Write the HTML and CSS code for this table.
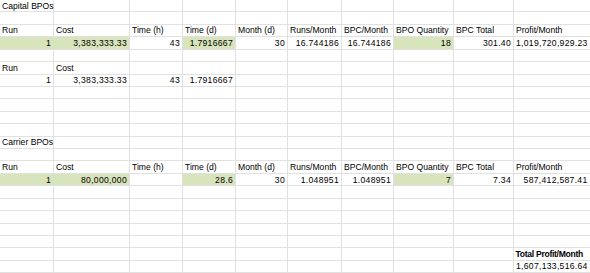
FILE: index.html
```html
<!DOCTYPE html>
<html>
<head>
<meta charset="utf-8">
<link rel="stylesheet" href="styles.css">
</head>
<body>
<div class="sheet">
<!-- row 1 -->
<div class="c">Capital BPOs</div><div class="c"></div><div class="c"></div><div class="c"></div><div class="c"></div><div class="c"></div><div class="c"></div><div class="c"></div><div class="c"></div><div class="c"></div>
<!-- row 2 -->
<div class="c"></div><div class="c"></div><div class="c"></div><div class="c"></div><div class="c"></div><div class="c"></div><div class="c"></div><div class="c"></div><div class="c"></div><div class="c"></div>
<!-- row 3 -->
<div class="c">Run</div><div class="c">Cost</div><div class="c">Time (h)</div><div class="c">Time (d)</div><div class="c">Month (d)</div><div class="c">Runs/Month</div><div class="c">BPC/Month</div><div class="c">BPO Quantity</div><div class="c">BPC Total</div><div class="c">Profit/Month</div>
<!-- row 4 -->
<div class="c n g gj">1</div><div class="c n g">3,383,333.33</div><div class="c n">43</div><div class="c n g">1.7916667</div><div class="c n">30</div><div class="c n">16.744186</div><div class="c n">16.744186</div><div class="c n g">18</div><div class="c n">301.40</div><div class="c n">1,019,720,929.23</div>
<!-- row 5 -->
<div class="c"></div><div class="c"></div><div class="c"></div><div class="c"></div><div class="c"></div><div class="c"></div><div class="c"></div><div class="c"></div><div class="c"></div><div class="c"></div>
<!-- row 6 -->
<div class="c">Run</div><div class="c">Cost</div><div class="c"></div><div class="c"></div><div class="c"></div><div class="c"></div><div class="c"></div><div class="c"></div><div class="c"></div><div class="c"></div>
<!-- row 7 -->
<div class="c n">1</div><div class="c n">3,383,333.33</div><div class="c n">43</div><div class="c n">1.7916667</div><div class="c"></div><div class="c"></div><div class="c"></div><div class="c"></div><div class="c"></div><div class="c"></div>
<!-- row 8 -->
<div class="c"></div><div class="c"></div><div class="c"></div><div class="c"></div><div class="c"></div><div class="c"></div><div class="c"></div><div class="c"></div><div class="c"></div><div class="c"></div>
<!-- row 9 -->
<div class="c"></div><div class="c"></div><div class="c"></div><div class="c"></div><div class="c"></div><div class="c"></div><div class="c"></div><div class="c"></div><div class="c"></div><div class="c"></div>
<!-- row 10 -->
<div class="c"></div><div class="c"></div><div class="c"></div><div class="c"></div><div class="c"></div><div class="c"></div><div class="c"></div><div class="c"></div><div class="c"></div><div class="c"></div>
<!-- row 11 -->
<div class="c"></div><div class="c"></div><div class="c"></div><div class="c"></div><div class="c"></div><div class="c"></div><div class="c"></div><div class="c"></div><div class="c"></div><div class="c"></div>
<!-- row 12 -->
<div class="c">Carrier BPOs</div><div class="c"></div><div class="c"></div><div class="c"></div><div class="c"></div><div class="c"></div><div class="c"></div><div class="c"></div><div class="c"></div><div class="c"></div>
<!-- row 13 -->
<div class="c"></div><div class="c"></div><div class="c"></div><div class="c"></div><div class="c"></div><div class="c"></div><div class="c"></div><div class="c"></div><div class="c"></div><div class="c"></div>
<!-- row 14 -->
<div class="c">Run</div><div class="c">Cost</div><div class="c">Time (h)</div><div class="c">Time (d)</div><div class="c">Month (d)</div><div class="c">Runs/Month</div><div class="c">BPC/Month</div><div class="c">BPO Quantity</div><div class="c">BPC Total</div><div class="c">Profit/Month</div>
<!-- row 15 -->
<div class="c n g gj">1</div><div class="c n g">80,000,000</div><div class="c n"></div><div class="c n g">28.6</div><div class="c n">30</div><div class="c n">1.048951</div><div class="c n">1.048951</div><div class="c n g">7</div><div class="c n">7.34</div><div class="c n">587,412,587.41</div>
<!-- row 16 -->
<div class="c"></div><div class="c"></div><div class="c"></div><div class="c"></div><div class="c"></div><div class="c"></div><div class="c"></div><div class="c"></div><div class="c"></div><div class="c"></div>
<!-- row 17 -->
<div class="c"></div><div class="c"></div><div class="c"></div><div class="c"></div><div class="c"></div><div class="c"></div><div class="c"></div><div class="c"></div><div class="c"></div><div class="c"></div>
<!-- row 18 -->
<div class="c"></div><div class="c"></div><div class="c"></div><div class="c"></div><div class="c"></div><div class="c"></div><div class="c"></div><div class="c"></div><div class="c"></div><div class="c"></div>
<!-- row 19 -->
<div class="c"></div><div class="c"></div><div class="c"></div><div class="c"></div><div class="c"></div><div class="c"></div><div class="c"></div><div class="c"></div><div class="c"></div><div class="c"></div>
<!-- row 20 -->
<div class="c"></div><div class="c"></div><div class="c"></div><div class="c"></div><div class="c"></div><div class="c"></div><div class="c"></div><div class="c"></div><div class="c"></div><div class="c"></div>
<!-- row 21 -->
<div class="c"></div><div class="c"></div><div class="c"></div><div class="c"></div><div class="c"></div><div class="c"></div><div class="c"></div><div class="c"></div><div class="c"></div><div class="c b">Total Profit/Month</div>
<!-- row 22 -->
<div class="c"></div><div class="c"></div><div class="c"></div><div class="c"></div><div class="c"></div><div class="c"></div><div class="c"></div><div class="c"></div><div class="c"></div><div class="c n">1,607,133,516.64</div>
</div>
</body>
</html>
```

FILE: styles.css
```css
html, body {
  margin: 0;
  padding: 0;
  background: #ffffff;
}

body {
  width: 590px;
  height: 273px;
  overflow: hidden;
  font-family: "Liberation Sans", Arial, sans-serif;
  color: #000000;
}

.sheet {
  display: grid;
  grid-template-columns: 54px 76px 53px 53px 52px 54px 52px 60px 60px 78px;
  grid-auto-rows: 12.43px;
  width: 592px;
}

.c {
  box-sizing: border-box;
  border-right: 1px solid #e1e1e1;
  border-bottom: 1px solid #e1e1e1;
  font-size: 8.6px;
  line-height: 11.43px;
  padding: 0.6px 2px 0 2px;
  white-space: nowrap;
  overflow: visible;
}

.n {
  text-align: right;
  letter-spacing: 0.3px;
}

.c:nth-child(10n) {
  padding-right: 3.5px;
}

.g {
  background: #d8e4bc;
}

.gj {
  border-right-color: #d8e4bc;
}

.b {
  font-weight: bold;
  font-size: 8.6px;
  letter-spacing: -0.3px;
  padding-left: 1.5px;
}
```
